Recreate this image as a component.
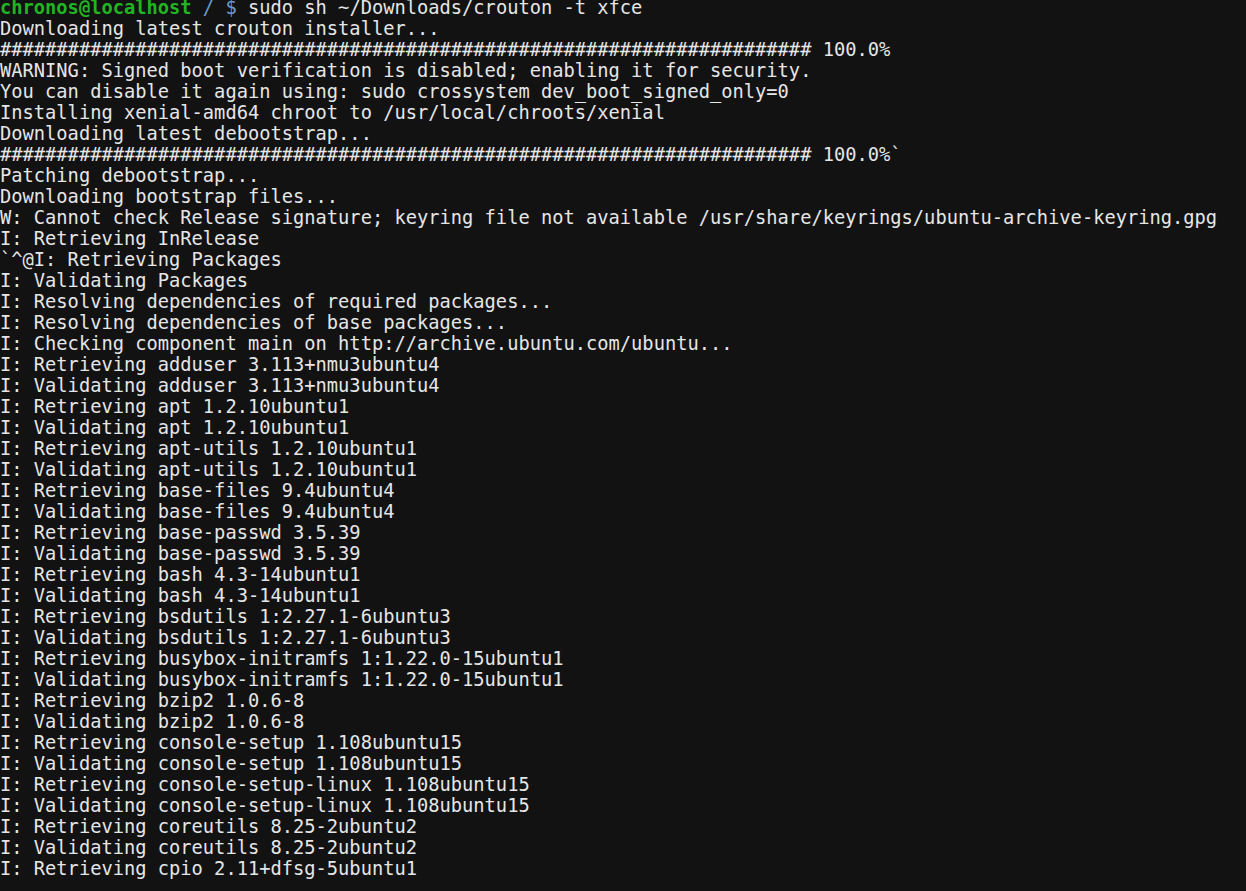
import React from "react";

const lines: string[] = [
  "Downloading latest crouton installer...",
  "######################################################################## 100.0%",
  "WARNING: Signed boot verification is disabled; enabling it for security.",
  "You can disable it again using: sudo crossystem dev_boot_signed_only=0",
  "Installing xenial-amd64 chroot to /usr/local/chroots/xenial",
  "Downloading latest debootstrap...",
  "######################################################################## 100.0%`",
  "Patching debootstrap...",
  "Downloading bootstrap files...",
  "W: Cannot check Release signature; keyring file not available /usr/share/keyrings/ubuntu-archive-keyring.gpg",
  "I: Retrieving InRelease",
  "`^@I: Retrieving Packages",
  "I: Validating Packages",
  "I: Resolving dependencies of required packages...",
  "I: Resolving dependencies of base packages...",
  "I: Checking component main on http://archive.ubuntu.com/ubuntu...",
  "I: Retrieving adduser 3.113+nmu3ubuntu4",
  "I: Validating adduser 3.113+nmu3ubuntu4",
  "I: Retrieving apt 1.2.10ubuntu1",
  "I: Validating apt 1.2.10ubuntu1",
  "I: Retrieving apt-utils 1.2.10ubuntu1",
  "I: Validating apt-utils 1.2.10ubuntu1",
  "I: Retrieving base-files 9.4ubuntu4",
  "I: Validating base-files 9.4ubuntu4",
  "I: Retrieving base-passwd 3.5.39",
  "I: Validating base-passwd 3.5.39",
  "I: Retrieving bash 4.3-14ubuntu1",
  "I: Validating bash 4.3-14ubuntu1",
  "I: Retrieving bsdutils 1:2.27.1-6ubuntu3",
  "I: Validating bsdutils 1:2.27.1-6ubuntu3",
  "I: Retrieving busybox-initramfs 1:1.22.0-15ubuntu1",
  "I: Validating busybox-initramfs 1:1.22.0-15ubuntu1",
  "I: Retrieving bzip2 1.0.6-8",
  "I: Validating bzip2 1.0.6-8",
  "I: Retrieving console-setup 1.108ubuntu15",
  "I: Validating console-setup 1.108ubuntu15",
  "I: Retrieving console-setup-linux 1.108ubuntu15",
  "I: Validating console-setup-linux 1.108ubuntu15",
  "I: Retrieving coreutils 8.25-2ubuntu2",
  "I: Validating coreutils 8.25-2ubuntu2",
  "I: Retrieving cpio 2.11+dfsg-5ubuntu1",
];

export default function App() {
  return (
    <div className="w-[1246px] h-[891px] overflow-hidden bg-[#121212] text-[#e6e6e6] font-['DejaVu_Sans_Mono',monospace] text-[18.73px] leading-[21px]">
      <div className="-mt-[3px] whitespace-pre">
        <div>
          <span className="font-bold text-[#22b422]">chronos@localhost</span>
          <span className="text-[#6d9bd1]"> / $ </span>
          <span>sudo sh ~/Downloads/crouton -t xfce</span>
        </div>
        {lines.map((l, i) => (
          <div key={i}>{l}</div>
        ))}
      </div>
    </div>
  );
}
